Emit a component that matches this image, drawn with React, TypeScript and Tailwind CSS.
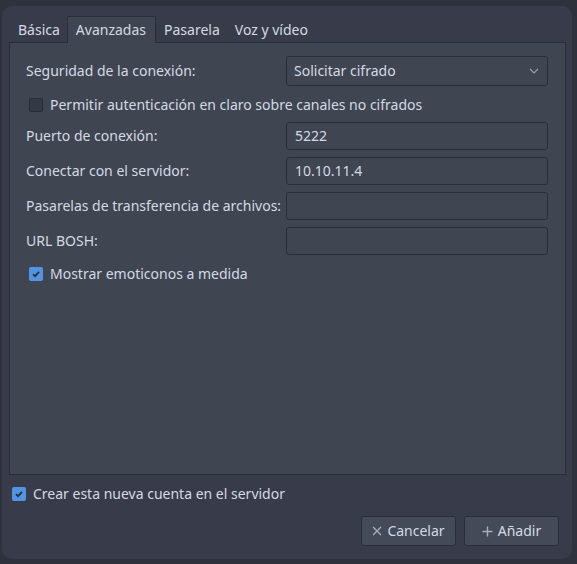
import React from "react";

const Check = ({ checked }: { checked: boolean }) =>
  checked ? (
    <span className="w-[14px] h-[14px] rounded-[2px] bg-[#5294e2] flex items-center justify-center shrink-0">
      <svg width="10" height="10" viewBox="0 0 10 10">
        <path d="M2 5.2 L4.1 7.2 L8 2.8" stroke="#2b2e39" strokeWidth="1.8" fill="none" />
      </svg>
    </span>
  ) : (
    <span className="w-[14px] h-[14px] rounded-[2px] bg-[#353945] border border-[#2b2e39] shrink-0" />
  );

const Field = ({ value }: { value?: string }) => (
  <div className="h-[28px] border border-[#2b2e39] rounded-[3px] bg-[#404552] flex items-center px-[8px] text-[#d3dae3]">
    {value}
  </div>
);

export default function App() {
  const labelRows: [string, string | undefined][] = [
    ["Puerto de conexión:", "5222"],
    ["Conectar con el servidor:", "10.10.11.4"],
    ["Pasarelas de transferencia de archivos:", undefined],
    ["URL BOSH:", undefined],
  ];
  return (
    <div
      className="w-[577px] h-[564px] bg-[#2f323d] pt-[6px] pl-[2px] pr-[5px] pb-[5px] text-[14px] leading-[20px] text-[#d3dae3]"
      style={{ fontFamily: '"Noto Sans", sans-serif' }}
    >
      <div className="h-full bg-[#383c4a] rounded-[10px] pt-[9px] px-[7px] flex flex-col">
        <div className="flex h-[27px] items-end">
          <div className="h-[26px] pl-[9px] pr-[7px] flex items-center pt-[2px]">Básica</div>
          <div className="h-[27px] pl-[8px] pr-[9px] flex items-center bg-[#404552] border border-b-0 border-[#2b2e39] rounded-t-[2px] relative top-[1px] z-10">
            Avanzadas
          </div>
          <div className="h-[26px] pl-[8px] pr-[8px] flex items-center pt-[2px]">Pasarela</div>
          <div className="h-[26px] pl-[7px] pr-[7px] flex items-center pt-[2px]">Voz y vídeo</div>
        </div>
        <div className="h-[433px] w-[557px] bg-[#404552] border border-[#2b2e39] pt-[13px] pl-[16px] pr-[17px]">
          <div className="flex items-center h-[30px]">
            <div className="w-[260px]">Seguridad de la conexión:</div>
            <div className="flex-1 h-[30px] border border-[#2b2e39] rounded-[3px] bg-[#404552] flex items-center px-[7px] justify-between">
              <span>Solicitar cifrado</span>
              <svg width="12" height="12" viewBox="0 0 12 12">
                <path d="M2 4 L6 8 L10 4" stroke="#9aa1ad" strokeWidth="1.2" fill="none" />
              </svg>
            </div>
          </div>
          <div className="flex items-center gap-[7px] h-[20px] mt-[9px] pl-[3px]">
            <Check checked={false} />
            <span>Permitir autenticación en claro sobre canales no cifrados</span>
          </div>
          <div className="flex flex-col gap-[7px] mt-[7px]">
            {labelRows.map(([l, v]) => (
              <div key={l} className="flex items-center">
                <div className="w-[260px] whitespace-nowrap">{l}</div>
                <div className="flex-1">
                  <Field value={v} />
                </div>
              </div>
            ))}
          </div>
          <div className="flex items-center gap-[7px] h-[20px] mt-[9px] pl-[3px]">
            <Check checked={true} />
            <span>Mostrar emoticonos a medida</span>
          </div>
        </div>
        <div className="flex items-center gap-[7px] mt-[11px] pl-[3px] h-[16px]">
          <Check checked={true} />
          <span>Crear esta nueva cuenta en el servidor</span>
        </div>
        <div className="flex justify-end gap-[8px] mt-[14px] pr-[6px]">
          <button className="w-[95px] h-[30px] bg-[#444a58] border border-[#2b2e39] rounded-[3px] flex items-center justify-center gap-[5px]">
            <svg width="10" height="10" viewBox="0 0 10 10">
              <path d="M1 1 L9 9 M9 1 L1 9" stroke="#a9afba" strokeWidth="1.3" />
            </svg>
            <span>Cancelar</span>
          </button>
          <button className="w-[95px] h-[30px] bg-[#444a58] border border-[#2b2e39] rounded-[3px] flex items-center justify-center gap-[5px]">
            <svg width="11" height="11" viewBox="0 0 11 11">
              <path d="M5.5 0.5 V10.5 M0.5 5.5 H10.5" stroke="#a9afba" strokeWidth="1.4" />
            </svg>
            <span>Añadir</span>
          </button>
        </div>
      </div>
    </div>
  );
}
